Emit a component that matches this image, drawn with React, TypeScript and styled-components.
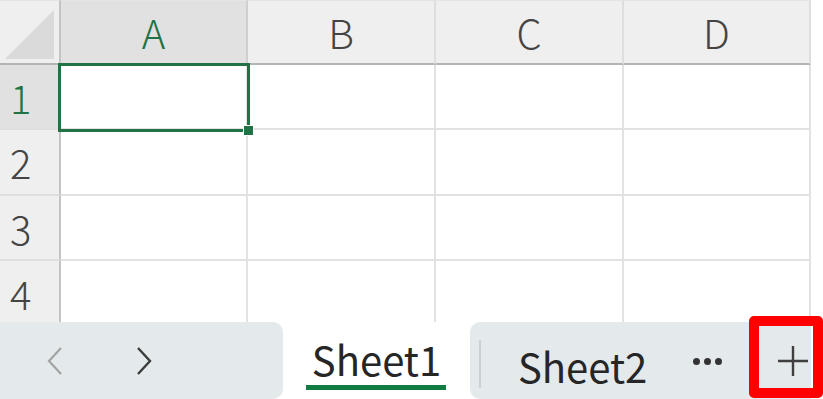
import React from 'react';
import styled, { createGlobalStyle } from 'styled-components';

const GlobalStyle = createGlobalStyle`
  html, body {
    margin: 0;
    padding: 0;
    background: #ffffff;
  }
  * {
    box-sizing: border-box;
  }
`;

const FONT = `"Noto Sans CJK JP", "Noto Sans", "DejaVu Sans", sans-serif`;
const GREEN = '#217346';

const Page = styled.div`
  width: 823px;
  height: 399px;
  position: relative;
  overflow: hidden;
  display: flex;
  flex-direction: column;
  font-family: ${FONT};
`;

const SheetArea = styled.div`
  height: 322px;
  overflow: hidden;
  position: relative;
`;

const Grid = styled.div`
  display: grid;
  grid-template-columns: 61px 187px 188px 188px 187px;
  grid-template-rows: 65px 65px 66px 65px 65px;
  width: 811px;
`;

const Corner = styled.div`
  background: #efefef;
  border-right: 2px solid #c4c4c4;
  border-bottom: 2px solid #b4b4b4;
  border-top: 1px solid #e4e4e4;
  position: relative;

  &::after {
    content: '';
    position: absolute;
    left: 5px;
    top: 9px;
    width: 49px;
    height: 49px;
    background: #dadada;
    clip-path: polygon(0 100%, 100% 0, 100% 100%);
  }
`;

const ColHead = styled.div<{ $active?: boolean }>`
  background: ${({ $active }) => ($active ? '#e1e1e1' : '#efefef')};
  border-top: 1px solid #e4e4e4;
  border-right: 2px solid ${({ $active }) => ($active ? '#cfcfcf' : '#dedede')};
  border-bottom: 2px solid #b4b4b4;
  display: flex;
  align-items: center;
  justify-content: center;
  font-size: 40px;
  line-height: 1;
  font-weight: 300;
  color: ${({ $active }) => ($active ? GREEN : '#444444')};
`;

const RowHead = styled.div<{ $active?: boolean }>`
  background: ${({ $active }) => ($active ? '#e1e1e1' : '#efefef')};
  border-right: 2px solid #c4c4c4;
  border-bottom: 2px solid #dedede;
  display: flex;
  align-items: center;
  padding-left: 10px;
  font-size: 40px;
  line-height: 1;
  font-weight: 300;
  color: ${({ $active }) => ($active ? GREEN : '#444444')};
`;

const Cell = styled.div`
  background: #ffffff;
  border-right: 2px solid #e2e2e2;
  border-bottom: 2px solid #e2e2e2;
`;

const Selection = styled.div`
  position: absolute;
  left: 58px;
  top: 63px;
  width: 192px;
  height: 69px;
  border: 3px solid ${GREEN};
`;

const FillHandle = styled.div`
  position: absolute;
  right: -7px;
  bottom: -7px;
  width: 11px;
  height: 11px;
  background: ${GREEN};
  border: 1px solid #ffffff;
`;

const TabBar = styled.div`
  height: 77px;
  display: flex;
  background: #ffffff;
`;

const NavPanel = styled.div`
  width: 283px;
  background: #e4e9ec;
  border-radius: 0 10px 10px 0;
  display: flex;
  align-items: center;
  padding-left: 45px;
  gap: 69px;
`;

const NavButton = styled.div`
  width: 20px;
  height: 30px;
  display: flex;
  align-items: center;
  justify-content: center;
`;

const ActiveTab = styled.div`
  width: 187px;
  display: flex;
  flex-direction: column;
  align-items: center;
  padding-top: 17px;
`;

const TabLabel = styled.span`
  font-size: 40px;
  color: #262626;
  line-height: 1;
`;

const Underline = styled.div`
  width: 140px;
  height: 5px;
  background: #107c41;
  margin-top: 6px;
  margin-left: -1px;
`;

const TabsPanel = styled.div`
  width: 341px;
  background: #e4e9ec;
  border-radius: 10px 0 0 10px;
  display: flex;
  align-items: center;
  padding-left: 9px;
`;

const Divider = styled.div`
  width: 2px;
  height: 48px;
  background: #cdd1d4;
  margin-top: 6px;
`;

const InactiveTab = styled.div`
  margin-left: 37px;
  align-self: flex-start;
  margin-top: 24px;
`;

const Dots = styled.div`
  margin-left: 46px;
  display: flex;
  gap: 4px;
  padding-top: 2px;
`;

const Dot = styled.span`
  width: 7px;
  height: 7px;
  border-radius: 50%;
  background: #333333;
`;

const AddButton = styled.div`
  margin-left: auto;
  width: 34px;
  height: 34px;
  margin-right: 1px;
  display: flex;
  align-items: center;
  justify-content: center;
`;

const Highlight = styled.div`
  position: absolute;
  left: 749px;
  top: 316px;
  width: 74px;
  height: 82px;
  border: 10px solid #ff0000;
  border-radius: 5px;
  pointer-events: none;
`;

const columns = ['A', 'B', 'C', 'D'];
const rows = [1, 2, 3, 4];

export default function App() {
  return (
    <Page>
      <GlobalStyle />
      <SheetArea>
        <Grid>
          <Corner />
          {columns.map((c, i) => (
            <ColHead key={c} $active={i === 0}>
              {c}
            </ColHead>
          ))}
          {rows.map((r) => (
            <React.Fragment key={r}>
              <RowHead $active={r === 1}>{r}</RowHead>
              {columns.map((c) => (
                <Cell key={c} />
              ))}
            </React.Fragment>
          ))}
        </Grid>
        <Selection>
          <FillHandle />
        </Selection>
      </SheetArea>
      <TabBar>
        <NavPanel>
          <NavButton>
            <svg width="18" height="30" viewBox="0 0 18 30">
              <path d="M15 2 L3 15 L15 28" fill="none" stroke="#a3a3a3" strokeWidth="2.2" />
            </svg>
          </NavButton>
          <NavButton>
            <svg width="18" height="30" viewBox="0 0 18 30">
              <path d="M3 2 L15 15 L3 28" fill="none" stroke="#3c3c3c" strokeWidth="2.4" />
            </svg>
          </NavButton>
        </NavPanel>
        <ActiveTab>
          <TabLabel>Sheet1</TabLabel>
          <Underline />
        </ActiveTab>
        <TabsPanel>
          <Divider />
          <InactiveTab>
            <TabLabel>Sheet2</TabLabel>
          </InactiveTab>
          <Dots>
            <Dot />
            <Dot />
            <Dot />
          </Dots>
          <AddButton>
            <svg width="32" height="32" viewBox="0 0 32 32">
              <path d="M16 1 V31 M1 16 H31" fill="none" stroke="#3f3f3f" strokeWidth="2.4" />
            </svg>
          </AddButton>
        </TabsPanel>
      </TabBar>
      <Highlight />
    </Page>
  );
}
